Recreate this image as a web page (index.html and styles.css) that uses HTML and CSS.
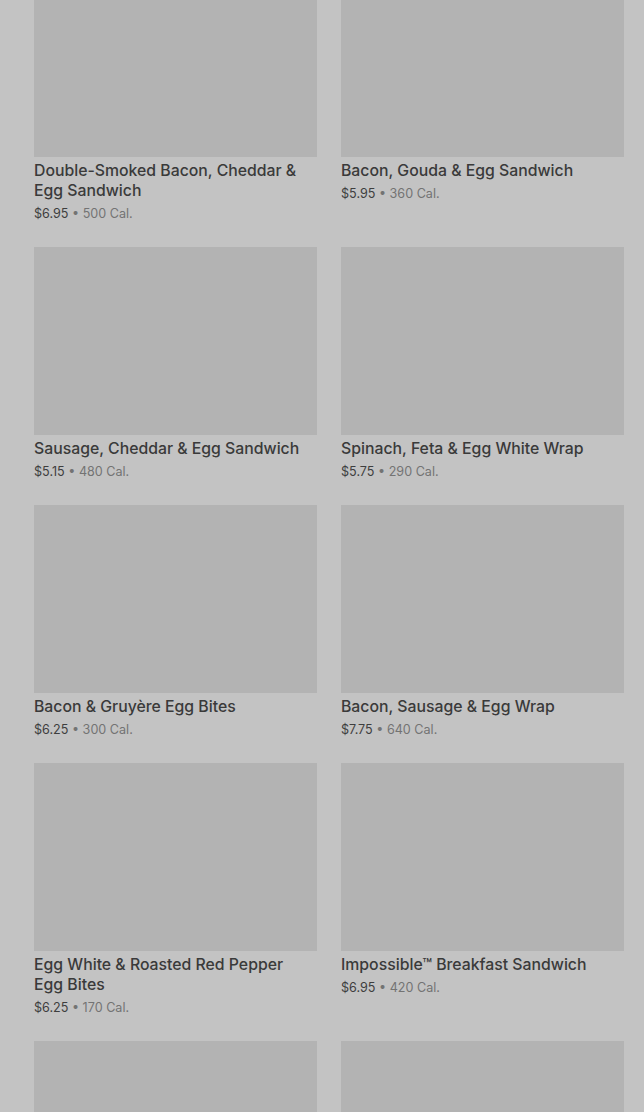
FILE: index.html
```html
<!DOCTYPE html>
<html lang="en">
<head>
<meta charset="UTF-8">
<meta name="viewport" content="width=device-width, initial-scale=1.0">
<title>Hot Breakfast</title>
<link rel="stylesheet" href="styles.css">
</head>
<body>

<div class="menu">
    <div class="item">
        <div class="photo"></div>
        <h3>Double-Smoked Bacon, Cheddar &amp; Egg Sandwich</h3>
        <p class="meta"><span class="price">$6.95</span> &bull; 500 Cal.</p>
    </div>
    <div class="item">
        <div class="photo"></div>
        <h3>Bacon, Gouda &amp; Egg Sandwich</h3>
        <p class="meta"><span class="price">$5.95</span> &bull; 360 Cal.</p>
    </div>
    <div class="item">
        <div class="photo"></div>
        <h3>Sausage, Cheddar &amp; Egg Sandwich</h3>
        <p class="meta"><span class="price">$5.15</span> &bull; 480 Cal.</p>
    </div>
    <div class="item">
        <div class="photo"></div>
        <h3>Spinach, Feta &amp; Egg White Wrap</h3>
        <p class="meta"><span class="price">$5.75</span> &bull; 290 Cal.</p>
    </div>
    <div class="item">
        <div class="photo"></div>
        <h3>Bacon &amp; Gruyère Egg Bites</h3>
        <p class="meta"><span class="price">$6.25</span> &bull; 300 Cal.</p>
    </div>
    <div class="item">
        <div class="photo"></div>
        <h3>Bacon, Sausage &amp; Egg Wrap</h3>
        <p class="meta"><span class="price">$7.75</span> &bull; 640 Cal.</p>
    </div>
    <div class="item">
        <div class="photo"></div>
        <h3>Egg White &amp; Roasted Red Pepper Egg Bites</h3>
        <p class="meta"><span class="price">$6.25</span> &bull; 170 Cal.</p>
    </div>
    <div class="item">
        <div class="photo"></div>
        <h3>Impossible™ Breakfast Sandwich</h3>
        <p class="meta"><span class="price">$6.95</span> &bull; 420 Cal.</p>
    </div>
    <div class="item">
        <div class="photo"></div>
    </div>
    <div class="item">
        <div class="photo"></div>
    </div>
</div>

</body>
</html>
```

FILE: styles.css
```css
body {
    font-family: Inter, "Liberation Sans", Arial, sans-serif;
    margin: 0;
    padding: 0;
    background-color: #c3c3c3;
    overflow: hidden;
}
.menu {
    display: grid;
    grid-template-columns: 1fr 1fr;
    column-gap: 24px;
    row-gap: 23px;
    margin-top: -31px;
    padding: 0 20px 0 34px;
}
.photo {
    height: 188px;
    background-color: #b3b3b3;
}
.item h3 {
    margin: 4px 0 0 0;
    padding-right: 12px;
    font-size: 15.8px;
    font-weight: 500;
    line-height: 20px;
    color: #3a3a3a;
}
.meta {
    margin: 3px 0 0 0;
    font-size: 12.6px;
    line-height: 20px;
    color: #737373;
}
.price {
    color: #3e3e3e;
}
```
